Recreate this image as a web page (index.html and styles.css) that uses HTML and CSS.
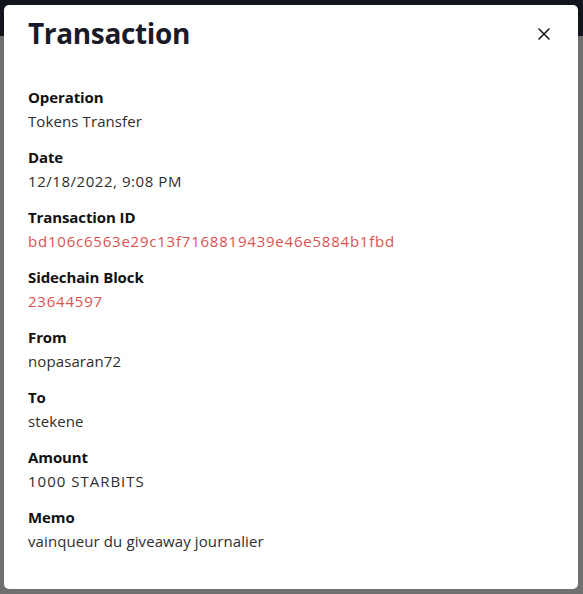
FILE: index.html
```html
<!DOCTYPE html>
<html>
<head>
<meta charset="utf-8">
<link rel="stylesheet" href="styles.css">
</head>
<body>
<header class="navbar"></header>
<main class="page"></main>
<div class="overlay">
  <div class="modal">
    <div class="modal-header">
      <h2 class="modal-title">Transaction</h2>
      <button class="close" aria-label="Close">
        <svg width="12" height="12" viewBox="0 0 12 12"><path d="M1 1L11 11M11 1L1 11" stroke="#1a1a1a" stroke-width="1.6" stroke-linecap="round"/></svg>
      </button>
    </div>
    <dl class="details">
      <div class="item"><dt>Operation</dt><dd>Tokens Transfer</dd></div>
      <div class="item"><dt>Date</dt><dd class="num">12/18/2022, 9:08 PM</dd></div>
      <div class="item"><dt>Transaction ID</dt><dd class="link num">bd106c6563e29c13f7168819439e46e5884b1fbd</dd></div>
      <div class="item"><dt>Sidechain Block</dt><dd class="link num">23644597</dd></div>
      <div class="item"><dt>From</dt><dd>nopasaran72</dd></div>
      <div class="item"><dt>To</dt><dd>stekene</dd></div>
      <div class="item"><dt>Amount</dt><dd class="num wide">1000 STARBITS</dd></div>
      <div class="item"><dt>Memo</dt><dd>vainqueur du giveaway journalier</dd></div>
    </dl>
  </div>
</div>
</body>
</html>
```
FILE: styles.css
```css
html, body {
  margin: 0;
  padding: 0;
  height: 100%;
}
body {
  background: #707070;
  font-family: "Open Sans", "Noto Sans", sans-serif;
}
.navbar {
  height: 36px;
  background: #12151c;
}
.overlay {
  position: fixed;
  inset: 0;
  display: flex;
  align-items: flex-start;
  justify-content: flex-start;
  padding: 5px 0 0 4px;
}
.modal {
  width: 574px;
  height: 584px;
  box-sizing: border-box;
  background: #ffffff;
  border-radius: 5px;
  padding: 0 24px;
}
.modal-header {
  display: flex;
  align-items: center;
  justify-content: space-between;
  height: 56px;
}
.modal-title {
  margin: 0;
  font-family: "Open Sans", sans-serif;
  font-weight: 700;
  font-size: 28px;
  color: #1a1b29;
  letter-spacing: -0.35px;
}
.close {
  border: 0;
  background: none;
  padding: 0;
  width: 24px;
  height: 24px;
  display: flex;
  align-items: center;
  justify-content: center;
  margin-right: -2px;
  margin-top: 1px;
}
.details {
  margin: 24px 0 0 0;
  display: flex;
  flex-direction: column;
  gap: 12px;
}
.item dt {
  font-weight: 700;
  font-size: 15px;
  line-height: 24px;
  color: #111111;
  letter-spacing: -0.1px;
}
.item dd {
  margin: 0;
  font-size: 15px;
  line-height: 24px;
  color: #2e2e2e;
  letter-spacing: 0.1px;
}
.item dd.num {
  letter-spacing: 0.55px;
}
.item dd.link {
  color: #d9534f;
  letter-spacing: 0.78px;
}
.item dd.wide {
  letter-spacing: 1px;
}
```
